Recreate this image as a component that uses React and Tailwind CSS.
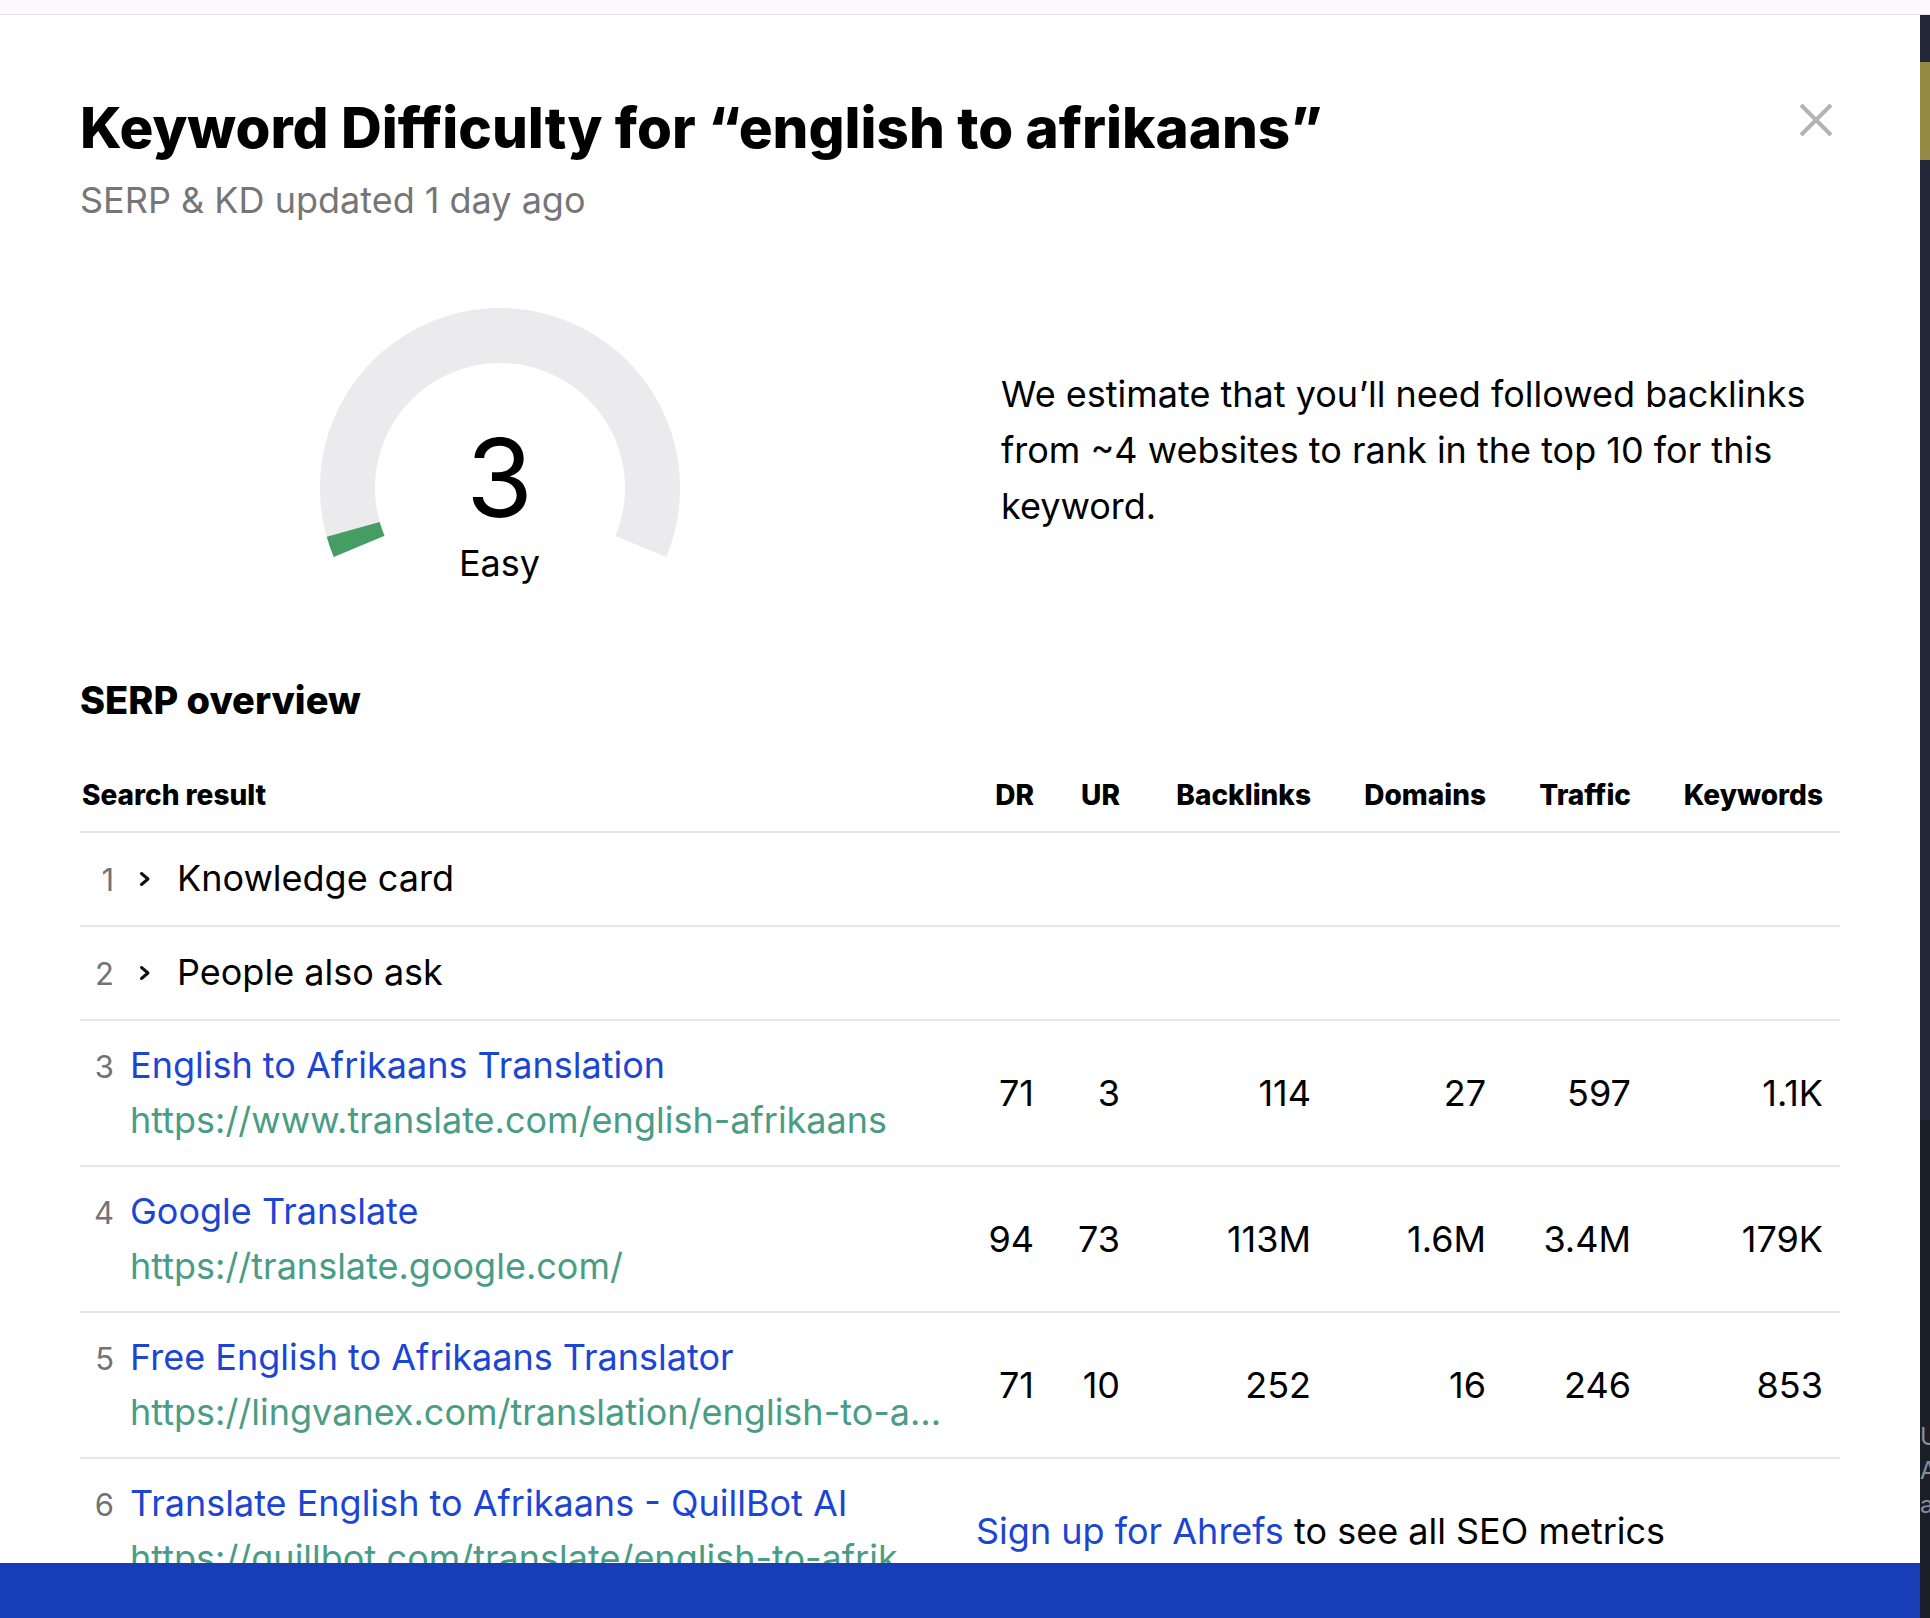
import React from 'react';

const rows = [
  { n: 3, title: 'English to Afrikaans Translation', url: 'https://www.translate.com/english-afrikaans', v: ['71', '3', '114', '27', '597', '1.1K'] },
  { n: 4, title: 'Google Translate', url: 'https://translate.google.com/', v: ['94', '73', '113M', '1.6M', '3.4M', '179K'] },
  { n: 5, title: 'Free English to Afrikaans Translator', url: 'https://lingvanex.com/translation/english-to-afrikaans', v: ['71', '10', '252', '16', '246', '853'] },
];

const cols = 'grid grid-cols-[1fr_90px_86px_191px_175px_145px_192px]';
const heads = ['DR', 'UR', 'Backlinks', 'Domains', 'Traffic', 'Keywords'];

const Chevron = () => (
  <svg width="14" height="18" viewBox="0 0 14 18" className="shrink-0 self-center">
    <path d="M3.5 3.5 L10 9 L3.5 14.5" fill="none" stroke="#111" strokeWidth="3" strokeLinecap="round" strokeLinejoin="round" />
  </svg>
);

const Gauge = () => {
  // ring: 225deg sweep, green part = 3% of it
  const cx = 180, cy = 180, r = 152.5;
  return (
    <div className="relative mx-auto w-[360px] h-[290px]">
      <svg width="360" height="250" viewBox="0 0 360 250" className="absolute left-0 top-0">
        <path d={`M ${cx - 140.9} ${cy + 58.4} A ${r} ${r} 0 1 1 ${cx + 140.9} ${cy + 58.4}`} fill="none" stroke="#ebebed" strokeWidth="55" />
        <path d={`M ${cx - 140.9} ${cy + 58.4} A ${r} ${r} 0 0 1 ${cx - 146.8} ${cy + 41.4}`} fill="none" stroke="#449d63" strokeWidth="55" />
      </svg>
      <div className="absolute inset-x-0 top-[116px] flex flex-col items-center text-black">
        <span className="text-[108px] leading-none">3</span>
        <span className="mt-[13px] text-[36px] leading-none">Easy</span>
      </div>
    </div>
  );
};

export default function App() {
  return (
    <div className="w-[1930px] h-[1618px] overflow-hidden flex flex-col bg-white font-[Inter,sans-serif] text-black">
      <div className="h-[15px] shrink-0 bg-[#fcf8fd] border-b border-[#e9e3eb]" />
      <div className="flex flex-1 min-h-0">
        <div className="flex flex-col w-[1920px]">
          <div className="relative flex-1 min-h-0 overflow-hidden bg-white pt-[81px] px-[80px]">
            <button className="absolute right-[87px] top-[88px] w-[34px] h-[34px]">
              <svg width="34" height="34" viewBox="0 0 34 34">
                <path d="M2 2 L32 32 M32 2 L2 32" stroke="#b4b4b4" strokeWidth="4" />
              </svg>
            </button>

            <h1 className="text-[56.5px] leading-[64px] font-extrabold">Keyword Difficulty for “english to afrikaans”</h1>
            <p className="mt-[20px] text-[36px] leading-[40px] text-[#767676]">SERP &amp; KD updated 1 day ago</p>

            <div className="mt-[88px] grid grid-cols-2 gap-[82px]">
              <Gauge />
              <p className="pt-[58px] text-[36px] leading-[56px]">
                We estimate that you’ll need followed backlinks from ~4 websites to rank in the top 10 for this keyword.
              </p>
            </div>

            <h2 className="mt-[79px] text-[38px] leading-[46px] font-extrabold">SERP overview</h2>

            <div className="mt-[54px]">
              <div className={`${cols} items-center pb-[18px] border-b-2 border-[#e6e6e6] text-[28px] leading-[36px] font-extrabold`}>
                <div className="pl-[2px]">Search result</div>
                {heads.map((h) => (
                  <div key={h} className="text-right pr-[17px]">{h}</div>
                ))}
              </div>

              {['Knowledge card', 'People also ask'].map((t, i) => (
                <div key={t} className="flex items-baseline py-[18px] border-b-2 border-[#e6e6e6] leading-[55px]">
                  <span className="w-[34px] text-right text-[31px] text-[#737373]">{i + 1}</span>
                  <span className="ml-[24px] self-center"><Chevron /></span>
                  <span className="ml-[25px] text-[36px]">{t}</span>
                </div>
              ))}

              {rows.map((r) => (
                <div key={r.n} className={`${cols} py-[17px] border-b-2 border-[#e6e6e6] leading-[55px]`}>
                  <div className="flex items-baseline min-w-0 pr-[18px]">
                    <span className="w-[34px] shrink-0 text-right text-[31px] text-[#737373]">{r.n}</span>
                    <div className="ml-[16px] min-w-0 text-[36px]">
                      <div className="truncate text-[#1d45d3]">{r.title}</div>
                      <div className="truncate text-[#4a9d84]">{r.url}</div>
                    </div>
                  </div>
                  {r.v.map((v, k) => (
                    <div key={k} className="self-center text-right pr-[17px] text-[36px]">{v}</div>
                  ))}
                </div>
              ))}

              <div className={`${cols} py-[17px] leading-[55px]`}>
                <div className="flex items-baseline min-w-0 pr-[18px]">
                  <span className="w-[34px] shrink-0 text-right text-[31px] text-[#737373]">6</span>
                  <div className="ml-[16px] min-w-0 text-[36px]">
                    <div className="truncate text-[#1d45d3]">Translate English to Afrikaans - QuillBot AI</div>
                    <div className="truncate text-[#4a9d84]">https://quillbot.com/translate/english-to-afrikaans-translator</div>
                  </div>
                </div>
                <div className="col-span-6 self-center pl-[15px] text-[36px] whitespace-nowrap">
                  <span className="text-[#1d45d3]">Sign up for Ahrefs</span> to see all SEO metrics
                </div>
              </div>
            </div>
          </div>
          <div className="h-[55px] shrink-0 bg-[#173db9]" />
        </div>

        <div className="w-[10px] flex flex-col overflow-hidden">
          <div className="h-[47px] bg-[#222838]" />
          <div className="h-[98px] bg-[#958a44]" />
          <div className="h-[960px] bg-[#222838]" />
          <div className="flex-1 bg-[#1b1f2a] pt-[300px] text-[24px] leading-[34px] text-[#8a8f99]">
            <div>U</div>
            <div>A</div>
            <div>a</div>
          </div>
        </div>
      </div>
    </div>
  );
}
